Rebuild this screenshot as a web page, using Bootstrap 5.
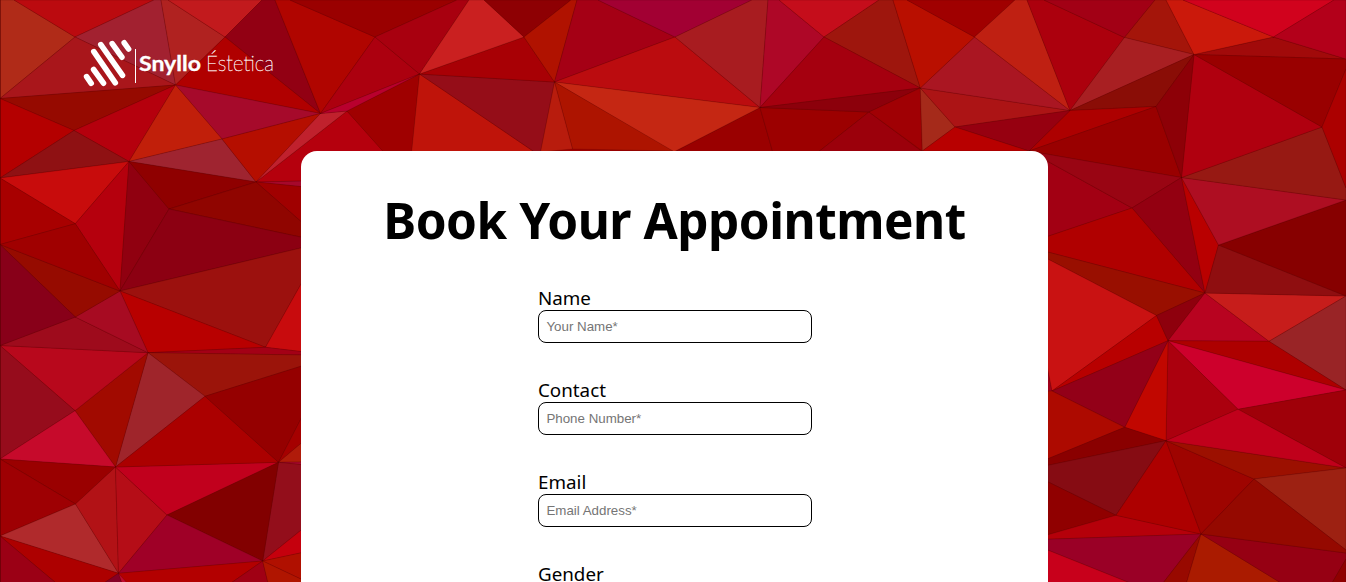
<!DOCTYPE html>
<html lang="en">
<head>
<meta charset="utf-8">
<meta name="viewport" content="width=device-width, initial-scale=1">
<title>Snyllo Éstetica</title>
<link href="https://cdn.jsdelivr.net/npm/bootstrap@5.3.0/dist/css/bootstrap.min.css" rel="stylesheet">
<style>
body{background:#9e0000;color:#000;font-family:"Open Sans","Noto Sans",sans-serif}
.stage{height:100vh;isolation:isolate}
.facets{z-index:-1}
.facets polygon{stroke:#300;stroke-opacity:.22;stroke-width:.8;stroke-linejoin:round}
.brand-logo{margin:30px 0 0 80px;width:200px;height:60px;display:block}
.booking{width:747px;margin:61px 0 0 301px;height:700px;border-radius:16px;padding-top:30px}
.booking h1{font-size:49.5px;font-weight:700;line-height:78px;height:78px;white-space:nowrap;font-family:"Noto Sans",sans-serif;letter-spacing:-.48px}
.fields{width:274px;margin:26px 0 0 237px;gap:34px}
.fields label{font-family:"Noto Sans",sans-serif;font-size:18.8px;line-height:27px;height:25px;display:block;white-space:nowrap}
.fields .form-control{height:33px;border:1px solid #000;border-radius:8px;padding:0 8px 0 7.4px;font:13.333px "Liberation Sans",Arial,sans-serif}
.fields .form-control::placeholder{color:#757575;opacity:1}
</style>
</head>
<body>
<div class="stage position-relative overflow-hidden">
<svg class="facets position-absolute top-0 start-0" width="1346" height="582" viewBox="0 0 1346 582" aria-hidden="true"></svg>
<header>
<svg class="brand-logo" viewBox="80 30 200 60" role="img">
<g stroke="#fff" stroke-width="5.6" stroke-linecap="round">
<path d="M86.6 76.6L91.2 83.3M93.6 69.5L103.5 83.2M93.8 51.6L115.3 82.8M100.8 44.6L122.5 75.4M112.2 43.6L121.9 57.2M124.2 42.8L128.6 49"/>
</g>
<path d="M135.5 49V83" stroke="#fff"/>
<text x="139" y="71" textLength="62" lengthAdjust="spacingAndGlyphs" fill="#fff" stroke="#fff" stroke-width=".3" font-family="Lato, sans-serif" font-weight="700" font-size="21">Snyllo</text>
<text x="206" y="71" textLength="68" lengthAdjust="spacingAndGlyphs" fill="#fff" stroke="#fff" stroke-width=".35" font-family="Lato, sans-serif" font-weight="200" font-size="21">Éstetica</text>
</svg>
</header>
<main class="booking bg-white">
<h1 class="text-center m-0">Book Your Appointment</h1>
<form class="fields d-flex flex-column">
<div><label for="name">Name</label><input class="form-control" id="name" placeholder="Your Name*"></div>
<div><label for="phone">Contact</label><input class="form-control" id="phone" placeholder="Phone Number*"></div>
<div><label for="mail">Email</label><input class="form-control" id="mail" placeholder="Email Address*"></div>
<div><label for="gender">Gender</label><input class="form-control" id="gender"></div>
</form>
</main>
</div>
<script>
// Shared mesh vertices
const V={A:"75,37",B:"175.5,85",C:"0,98.5",D:"74,130.5",E:"129,161.5",F:"0,178",G:"222,139",H:"256,182",I:"225,37",J:"320.5,113.5",K:"375,37",L:"419.5,74",M:"347,111",N:"524,37",O:"554.5,82",P:"675,37",Q:"760,107.5",R:"824,37",S:"920.3,88",T:"869,112",U:"974.5,37",W:"955,127",X:"922.3,151",Y:"1029,151",Z:"1124.5,37.5",V:"1070,110.5",
AA:"1194,54.5",AB:"1156,106.5",AC:"1181.5,177.5",AD:"1273.5,37",AE:"1346,59",AF:"1322,127",AG:"1346,200",AH:"1132,208",AI:"1205,293",AJ:"1218.5,245",AK:"1156.5,315.5",AL:"1168,340.7",AM:"1052,391",AN:"1269,341.3",AO:"1346,296",AP:"1238,409.3",AQ:"1166,440.7",AR:"1124.7,427.3",AS:"1116,515.3",AT:"1201,534",AU:"1254,479",AV:"1346,390",AW:"1346,468",
b:"75.3,223.7",c:"0,244.5",d:"120,291",e:"169,209",f:"75.3,317",g:"0,345.5",h:"148,352.7",i:"265.5,347.3",j:"75,410.7",k:"205,396.3",l:"0,459",m:"115.5,467",n:"278.5,462.3",o:"75.5,504",p:"0,536",q:"118.5,573.3",r:"167,515",s:"262.7,561"};
// One facet per entry: colour, then vertices (names or x,y)
const facets=`b02b18 0,0 14,0 A C
bb0a0f 14,0 A 154,0
a22130 A 154,0 161,0 B
a9161b A C B
960a00 C B D
b40000 C D F
b5000d B D E
8f1113 D E F
b02220 161,0 168,0 I B
c21a1d 168,0 262,0 I
920013 I 262,0 275,0 J
b00000 I B J
a60a2b B J G
c11f0a B E G
9f2430 E G H
b50e00 G J H
b5000d M H 305,181 383,151
a6082b H 305,181 305,187
a00000 H 305,187 305,225
c0212d J M H
b00500 275,0 290,0 K J
9a0000 290,0 457,0 K
ac000f K J L
a8000f K 457,0 469,0 L
9f0000 L M 388,157 411.5,157
b9002e J L M
bf140a L 411.5,153 536,153
950d18 L O 540.5,153 536,153
a80005 L N O
ca2020 469,0 484,0 N L
8e0003 484,0 571,0 N
b01200 N 571,0 577,0 O
a50015 O 577,0 598,0 P
bb0c0f O P Q
a20033 598,0 752,0 P
a81c20 P 752,0 768,0 Q
ae0727 Q 768,0 779,0 R
c50d1b 779,0 879,0 R
9e160d R 879,0 893,0 S
a5000f R Q S
9a0000 Q 672,153 773,153
9c0000 Q T 817,153 773,153
8c000b Q S T
c52713 O Q 673.5,152
ad1400 O 673,151 572.5,149
b81c0d O 540.5,152 572.5,149
9b000b T 817,153 924,153
a00004 T S X
a52a1a S X W
ac1415 S W V
aa1622 S U V
b90f00 893,0 907,0 U S
a00000 907,0 1015,0 U
bf2012 U 1015,0 1027,0 V
ac000d V 1027,0 1044,0 Z
a20015 1044,0 1155,0 Z
a4150a Z 1155,0 1166,0 AA
a81f22 Z AA V
8a0d06 V AA AB
ad0000 V AB Y
960010 V W Y
b80000 W X Y
990000 Y AB AC
a20013 Y AH 1040,239
990513 Y AC AH
930011 AC AH AI
b90000 AC AI AJ
b00000 AH 1040,239 1040,250 AI
990f00 1040,250 AI AK 1040,255
a0001a 1047,366 AM 1047,395
c91212 1040,255 AK AM 1046,360
b80000 AK AL AM
8e000d AI AK AL
b80320 AI AL AN
c71d1b AI AN AO
8f0e10 AI AJ AO
870000 AJ AG AO
ae0e22 AC AJ AG
971913 AC AG 1346,188 AF
b0000f AC AA AF
8d0007 AA AC AB
a10a0a AA AD AE
990000 AA AE 1346,69 AF
ac0000 AF 1346,69 1346,188
cb190b AA 1166,0 1183,0 AD
d1021d 1183,0 1334,0 AD
b3001a AD 1334,0 1346,0 AE
992426 AN AO AV
ad0000 AL AN AV
cd002c AL AV AP
9f0009 AP AV AW
ab000e AL AP AQ
c10700 AL AQ AR
930018 AL AM AR
ad0a00 AM AR 1040,462 1048,391
8a0000 1040,462 AR AQ 1040,467
860c13 1040,467 AQ AS 1040,478
900000 1040,478 AS 1040,537
b5000a AS AT 1040,539.5 1040,537
9a0026 AT 1040,539.5 1040,547 1130,583 1163,583
c8001b 1040,547 1130,583 1040,583
980900 AT 1163,583 1186.5,583
aa1b00 AT 1186.5,583 1281,583
960013 AT 1281,583 1332,583 1346,559 1346,553
8f0000 1332,583 1346,559 1346,583
ad0000 AQ AS AT
9e0400 AQ AT AU
9c1000 AQ AU AW
c0001b AQ AP AW
9d2112 AU AW 1346,550
950900 AU AT 1346,553 1346,550
c80c0c F E b
a80000 F b c
b5000d E b d
900010 E d e
8f0000 E e H
900500 H e 305,238 305,225
8c0012 e d 305,247 305,238
9c110e d 305,247 305,277 i
c80b0d i 305,277 305,352
b80000 d i h
a30016 h i 305,352 305,355
9b140a h 305,355 305,365 k
9f252b h k m
a10a00 h j m
b8081c g h j
9e0b1c g f h
a70b22 f d h
960b00 c d f
a00000 c b d
880019 c f g
960c1c g j l
c60a2b j l m
9a0000 l m o
9e0003 l o p
b02a2c o p q
b21216 m o q
b50d17 m q r
c1001d m r n
ab0000 m k n
950000 k 305,365 305,411 n
a50000 n 305,411 305,440
b01b0a n 305,440 305,462
a8082c n 305,462 305,465
930e1b n 305,465 305,527 s
820000 n r s
9f0027 r q s
b30000 q s 231,583 126,583
a00014 s 231,583 268,583
c5000d s 305,527 305,552
b01000 s 305,552 305,581
b01500 s 305,581 305,583 268,583
ad0000 p q 104,583 56,583
9b0015 p 56,583 0,583
850025 q 104,583 122,583
c00a30 q 122,583 127,583`;
document.querySelector(".facets").innerHTML=facets.split("\n").map(row=>{
  const [fill,...pts]=row.split(" ");
  return `<polygon fill="#${fill}" points="${pts.map(p=>V[p]||p).join(" ")}"/>`;
}).join("")+'<path d="M.5 0V582" stroke="#500" stroke-opacity=".5"/>';
</script>
<script src="https://cdn.jsdelivr.net/npm/bootstrap@5.3.0/dist/js/bootstrap.bundle.min.js"></script>
</body>
</html>
